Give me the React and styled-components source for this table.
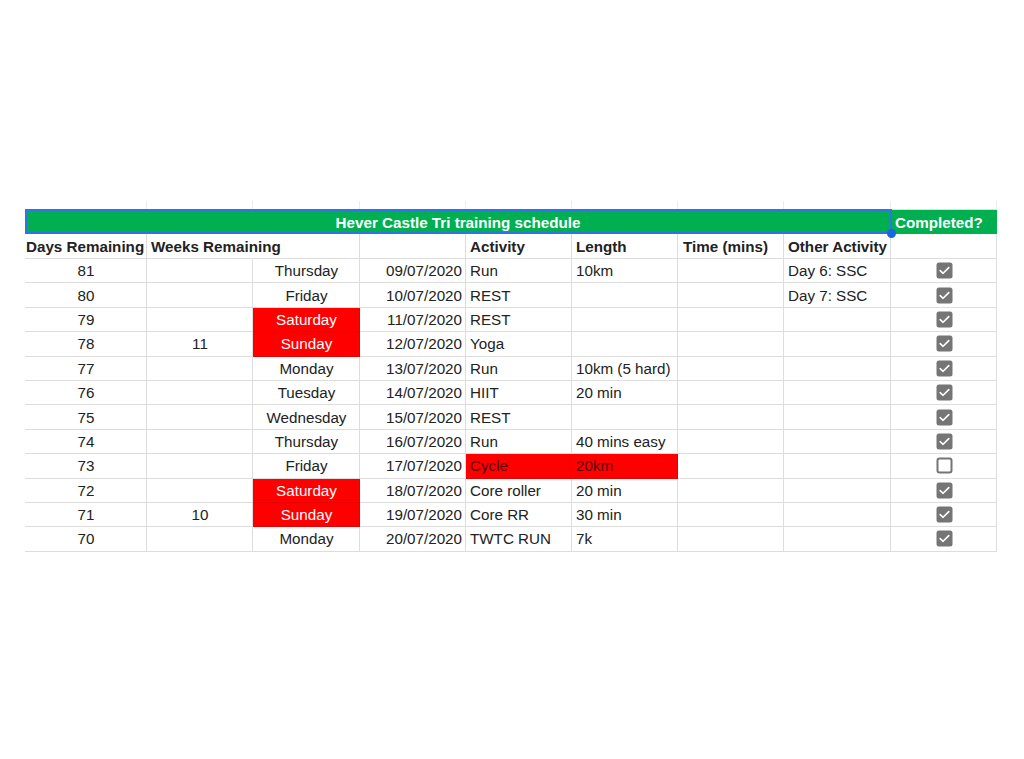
import React from 'react';
import styled, { createGlobalStyle } from 'styled-components';

const rows = [
  { days: 81, weeks: '', day: 'Thursday', date: '09/07/2020', act: 'Run', len: '10km', other: 'Day 6: SSC', done: true },
  { days: 80, weeks: '', day: 'Friday', date: '10/07/2020', act: 'REST', len: '', other: 'Day 7: SSC', done: true },
  { days: 79, weeks: '', day: 'Saturday', date: '11/07/2020', act: 'REST', len: '', other: '', done: true, weekend: true },
  { days: 78, weeks: '11', day: 'Sunday', date: '12/07/2020', act: 'Yoga', len: '', other: '', done: true, weekend: true },
  { days: 77, weeks: '', day: 'Monday', date: '13/07/2020', act: 'Run', len: '10km (5 hard)', other: '', done: true },
  { days: 76, weeks: '', day: 'Tuesday', date: '14/07/2020', act: 'HIIT', len: '20 min', other: '', done: true },
  { days: 75, weeks: '', day: 'Wednesday', date: '15/07/2020', act: 'REST', len: '', other: '', done: true },
  { days: 74, weeks: '', day: 'Thursday', date: '16/07/2020', act: 'Run', len: '40 mins easy', other: '', done: true },
  { days: 73, weeks: '', day: 'Friday', date: '17/07/2020', act: 'Cycle', len: '20km', other: '', done: false, missed: true },
  { days: 72, weeks: '', day: 'Saturday', date: '18/07/2020', act: 'Core roller', len: '20 min', other: '', done: true, weekend: true },
  { days: 71, weeks: '10', day: 'Sunday', date: '19/07/2020', act: 'Core RR', len: '30 min', other: '', done: true, weekend: true },
  { days: 70, weeks: '', day: 'Monday', date: '20/07/2020', act: 'TWTC RUN', len: '7k', other: '', done: true },
];

const GlobalStyle = createGlobalStyle`
  body {
    margin: 0;
    background: #fff;
    font-family: "Liberation Sans", Arial, sans-serif;
  }
`;

const Page = styled.div`
  width: 1024px;
  height: 759px;
  padding: 201px 0 0 25px;
  box-sizing: border-box;
`;

const Sheet = styled.div`
  display: grid;
  grid-template-columns: 122px 106px 107px 106px 106px 106px 106px 107px 106px;
  grid-template-rows: 9px 24px 25px;
  grid-auto-rows: 24.4px;
  font-size: 15.2px;
  color: #222;
`;

const Stub = styled.div`
  border-right: 1px solid #ececec;
  border-bottom: 1px solid #dedede;
`;

const Title = styled.div`
  grid-column: span 8;
  position: relative;
  background: #00b050;
  color: #fff;
  font-weight: 700;
  display: flex;
  align-items: center;
  justify-content: center;

  &::before {
    content: '';
    position: absolute;
    inset: -1px -1px 0 0;
    border: 2px solid #2f74e6;
  }

  &::after {
    content: '';
    position: absolute;
    right: -5px;
    bottom: -4px;
    width: 9px;
    height: 9px;
    border-radius: 50%;
    background: #1a68e0;
    z-index: 2;
  }
`;

const Completed = styled.div`
  background: #00b050;
  color: #fff;
  font-weight: 700;
  display: flex;
  align-items: center;
  padding-left: 4px;
`;

const Cell = styled.div`
  box-sizing: border-box;
  display: flex;
  align-items: center;
  justify-content: ${p => p.$align === 'center' ? 'center' : p.$align === 'right' ? 'flex-end' : 'flex-start'};
  padding: 0 3px 0 ${p => p.$padL ?? 4}px;
  white-space: nowrap;
  border-right: 1px solid ${p => p.$noRight ? 'transparent' : p.$bg ? '#e80000' : '#dddddd'};
  border-bottom: 1px solid ${p => p.$bg ? '#e80000' : '#dddddd'};
  background: ${p => p.$bg || 'transparent'};
  color: ${p => p.$color || '#222'};
  font-weight: ${p => p.$bold ? 700 : 400};
`;

const Box = ({ done }) => (
  <svg width="17" height="17" viewBox="0 0 17 17">
    {done ? (
      <>
        <rect x="0.5" y="0.5" width="16" height="16" rx="2.5" fill="#757575" />
        <path d="M4.2 8.6 L7.1 11.3 L12.8 5.6" fill="none" stroke="#fff" strokeWidth="1.6" strokeLinecap="round" strokeLinejoin="round" />
      </>
    ) : (
      <rect x="1.5" y="1.5" width="14" height="14" rx="2" fill="#fff" stroke="#757575" strokeWidth="2" />
    )}
  </svg>
);

const App = () => {
  return (
    <Page>
      <GlobalStyle />
      <Sheet>
        {Array.from({ length: 9 }).map((_, i) => <Stub key={i} />)}

        <Title>Hever Castle Tri training schedule</Title>
        <Completed>Completed?</Completed>

        <Cell $bold $padL={1}>Days Remaining</Cell>
        <Cell $bold $noRight>Weeks Remaining</Cell>
        <Cell />
        <Cell />
        <Cell $bold>Activity</Cell>
        <Cell $bold>Length</Cell>
        <Cell $bold $padL={5}>Time (mins)</Cell>
        <Cell $bold>Other Activity</Cell>
        <Cell />

        {rows.map(r => (
          <React.Fragment key={r.days}>
            <Cell $align="center">{r.days}</Cell>
            <Cell $align="center">{r.weeks}</Cell>
            <Cell $align="center" $bg={r.weekend ? '#ff0000' : null} $color={r.weekend ? '#fff' : null}>{r.day}</Cell>
            <Cell $align="right">{r.date}</Cell>
            <Cell $bg={r.missed ? '#ff0000' : null} $color={r.missed ? '#5c0000' : null}>{r.act}</Cell>
            <Cell $bg={r.missed ? '#ff0000' : null} $color={r.missed ? '#5c0000' : null}>{r.len}</Cell>
            <Cell />
            <Cell>{r.other}</Cell>
            <Cell $align="center"><Box done={r.done} /></Cell>
          </React.Fragment>
        ))}
      </Sheet>
    </Page>
  );
};

export default App;
